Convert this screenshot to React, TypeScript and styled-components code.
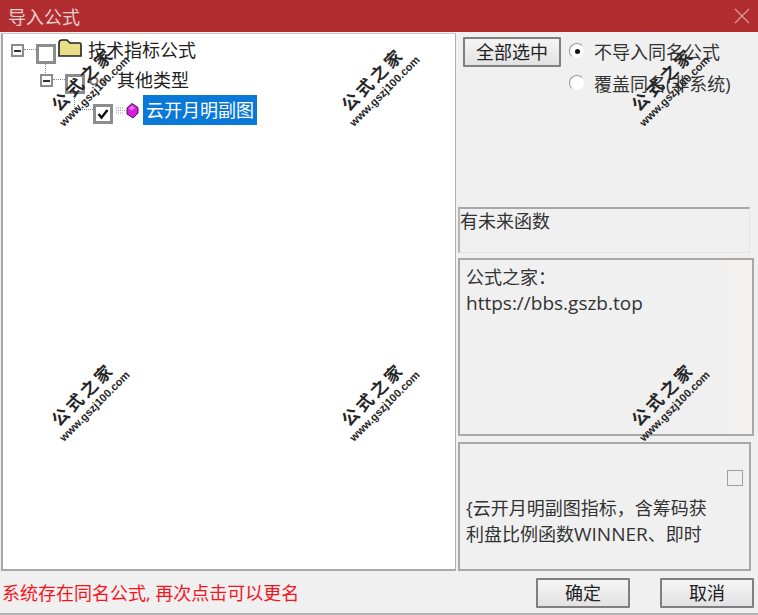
import React from 'react';
import styled, { createGlobalStyle } from 'styled-components';

const FONT = '"Open Sans", "Noto Sans CJK SC", "Liberation Sans", sans-serif';

const GlobalStyle = createGlobalStyle`
  html, body {
    margin: 0;
    padding: 0;
    background: #f0f0f0;
  }
  body {
    font-family: ${FONT};
    color: #333;
  }
`;

const Dialog = styled.div`
  position: relative;
  width: 758px;
  height: 615px;
  display: flex;
  flex-direction: column;
  overflow: hidden;
  background: #f0f0f0;
  border-bottom: 2px solid #b4b4b4;
  box-sizing: border-box;
`;

const TitleBar = styled.div`
  height: 32px;
  flex: none;
  display: flex;
  align-items: center;
  justify-content: space-between;
  padding: 0 8px;
  background: #b22d30;
  color: #edcfcf;
  font-size: 18px;
`;

const CloseIcon = styled.svg`
  width: 16px;
  height: 16px;
  stroke: #dd9a9a;
  stroke-width: 1.2;
  fill: none;
`;

const Body = styled.div`
  flex: 1;
  min-height: 0;
  display: grid;
  grid-template-columns: 455px 1fr;
  column-gap: 2px;
  padding-top: 1px;
  padding-left: 1px;
`;

const TreePanel = styled.div`
  background: #fff;
  border-left: 2px solid #a8a8a8;
  border-right: 1px solid #b0b0b0;
  border-bottom: 2px solid #a8a8a8;
  border-top: 1px solid #c8c8c8;
  box-sizing: border-box;
`;

const TreeRow = styled.div<{ $indent: number }>`
  position: relative;
  height: 30px;
  display: flex;
  align-items: flex-start;
  padding-left: ${p => p.$indent}px;
  font-size: 18px;
  line-height: 30px;
  color: #222;
`;

const Expander = styled.span`
  flex: none;
  width: 9px;
  height: 9px;
  margin-top: 10px;
  border: 2px solid #8c8c8c;
  display: flex;
  align-items: center;
  justify-content: center;
  background: #fff;
  &::after {
    content: '';
    width: 7px;
    height: 2px;
    background: #333;
  }
`;

const HDots = styled.span<{ $width: number }>`
  flex: none;
  width: ${p => p.$width}px;
  margin-top: 15px;
  border-top: 1px dotted #888;
`;

const VDots = styled.span<{ $left: number; $top: number; $height: number }>`
  position: absolute;
  left: ${p => p.$left}px;
  top: ${p => p.$top}px;
  height: ${p => p.$height}px;
  border-left: 1px dotted #888;
`;

const TreeCheck = styled.span`
  flex: none;
  width: 14px;
  height: 14px;
  margin-top: 10px;
  border: 3px solid #8c8c8c;
  background: #fff;
  display: flex;
  align-items: center;
  justify-content: center;
`;

const FolderIcon = styled.svg`
  flex: none;
  width: 24px;
  height: 20px;
  margin: 4px 3px 0 2px;
`;

const GearIcon = styled.svg`
  flex: none;
  width: 20px;
  height: 16px;
  margin: 9px 6px 0 3px;
`;

const GemIcon = styled.svg`
  flex: none;
  width: 24px;
  height: 16px;
  margin: 9px 3px 0 3px;
`;

const TreeLabel = styled.span<{ $selected?: boolean }>`
  padding: 0 3px;
  margin-top: 1px;
  background: ${p => (p.$selected ? '#0a78d7' : 'transparent')};
  color: ${p => (p.$selected ? '#fff' : '#222')};
`;

const SideColumn = styled.div`
  display: flex;
  flex-direction: column;
  width: 296px;
`;

const OptionsArea = styled.div`
  height: 174px;
  flex: none;
  display: flex;
  align-items: flex-start;
  gap: 8px;
  padding: 4px 0 0 5px;
  box-sizing: border-box;
`;

const Button = styled.button<{ $w: number }>`
  width: ${p => p.$w}px;
  height: 30px;
  padding: 0;
  flex: none;
  border: 2px solid #7f7f7f;
  border-radius: 1px;
  background: linear-gradient(#f5f5f5, #e2e2e2);
  color: #222;
  font-family: ${FONT};
  font-size: 18px;
  line-height: 24px;
`;

const RadioGroup = styled.div`
  display: flex;
  flex-direction: column;
  gap: 2px;
  margin-top: -1px;
`;

const RadioRow = styled.div`
  display: flex;
  align-items: center;
  height: 30px;
  font-size: 18px;
  color: #333;
  white-space: nowrap;
`;

const RadioDot = styled.span<{ $on?: boolean }>`
  flex: none;
  width: 16px;
  height: 16px;
  margin-right: 9px;
  border-radius: 50%;
  border: 1px solid #9a9a9a;
  border-right-color: #eee;
  border-bottom-color: #eee;
  background: #fff;
  box-sizing: border-box;
  display: flex;
  align-items: center;
  justify-content: center;
  &::after {
    content: '';
    width: 5px;
    height: 5px;
    border-radius: 50%;
    background: ${p => (p.$on ? '#111' : 'transparent')};
  }
`;

const FutureBox = styled.div`
  height: 46px;
  width: 292px;
  flex: none;
  box-sizing: border-box;
  border-top: 2px solid #a8a8a8;
  border-left: 2px solid #b4b4b4;
  border-right: 1px solid #e4e4e4;
  border-bottom: 1px solid #e4e4e4;
  font-size: 18px;
  line-height: 24px;
  color: #333;
`;

const TextPanel = styled.div<{ $h: number; $w: number; $gap: number }>`
  height: ${p => p.$h}px;
  width: ${p => p.$w}px;
  flex: none;
  margin-top: ${p => p.$gap}px;
  box-sizing: border-box;
  border: 2px solid #a8a8a8;
  display: grid;
  grid-template-columns: 1fr 26px;
  font-size: 18px;
  line-height: 26px;
  color: #333;
`;

const PanelText = styled.div<{ $top: number }>`
  padding: ${p => p.$top}px 6px 0 6px;
  overflow: hidden;
`;

const Latin = styled.span`
  font-size: 19px;
`;

const ScrollGutter = styled.div`
  background: #f3f2f0;
`;

const GutterPlain = styled.div`
  display: flex;
  justify-content: center;
  padding-top: 26px;
`;

const SmallBox = styled.span`
  width: 14px;
  height: 14px;
  margin-right: 2px;
  border: 1px solid #a0a0a0;
  background: #f0f0f0;
`;

const Footer = styled.div`
  height: 42px;
  flex: none;
  display: flex;
  align-items: flex-start;
  padding: 7px 4px 0 2px;
  box-sizing: border-box;
`;

const Status = styled.div`
  flex: 1;
  font-size: 18px;
  line-height: 30px;
  color: #f5141e;
`;

const FooterButtons = styled.div`
  display: flex;
  gap: 30px;
`;

const Watermark = styled.div<{ $x: number; $y: number }>`
  position: absolute;
  left: ${p => p.$x}px;
  top: ${p => p.$y}px;
  width: 110px;
  margin-left: -58px;
  margin-top: -20px;
  transform: rotate(-45deg);
  text-align: center;
  pointer-events: none;
  color: #262626;
`;

const WatermarkTitle = styled.div`
  font-family: "Noto Sans CJK SC", serif;
  font-size: 17px;
  font-weight: 700;
  line-height: 22px;
  letter-spacing: 3px;
`;

const WatermarkUrl = styled.div`
  font-family: "Liberation Sans", sans-serif;
  font-size: 11px;
  font-weight: 700;
  line-height: 13px;
  white-space: nowrap;
`;

const marks = [
  { x: 90, y: 86 },
  { x: 380, y: 86 },
  { x: 670, y: 86 },
  { x: 90, y: 401 },
  { x: 380, y: 401 },
  { x: 670, y: 401 },
];

export default function App() {
  return (
    <>
      <GlobalStyle />
      <Dialog>
        <TitleBar>
          <span>导入公式</span>
          <CloseIcon viewBox="0 0 16 16">
            <path d="M1 1 L15 15 M15 1 L1 15" />
          </CloseIcon>
        </TitleBar>
        <Body>
          <TreePanel>
            <TreeRow $indent={8}>
              <Expander />
              <HDots $width={12} />
              <TreeCheck />
              <FolderIcon viewBox="0 0 24 20">
                <path d="M1 18 V5 Q1 2 4 2 H9 L12 5 H22 Q23 5 23 7 V18 Z" fill="#e8df88" stroke="#222" strokeWidth="1.6" />
              </FolderIcon>
              <TreeLabel>技术指标公式</TreeLabel>
              <VDots $left={42} $top={27} $height={14} />
            </TreeRow>
            <TreeRow $indent={37}>
              <Expander />
              <HDots $width={12} />
              <TreeCheck />
              <GearIcon viewBox="0 0 20 16">
                <circle cx="6" cy="8" r="3.5" fill="none" stroke="#777" strokeWidth="2" />
                <circle cx="15" cy="8" r="2.5" fill="none" stroke="#888" strokeWidth="1.6" />
              </GearIcon>
              <TreeLabel>其他类型</TreeLabel>
              <VDots $left={71} $top={27} $height={18} />
            </TreeRow>
            <TreeRow $indent={72}>
              <HDots $width={18} />
              <TreeCheck>
                <svg width="12" height="12" viewBox="0 0 12 12">
                  <path d="M1.5 6 L4.5 9.5 L10.5 2" fill="none" stroke="#111" strokeWidth="2.4" />
                </svg>
              </TreeCheck>
              <GemIcon viewBox="0 0 24 16">
                <path d="M0 5 H8 M0 7.5 H9 M0 10 H8" stroke="#999" strokeWidth="1" strokeDasharray="1 1" />
                <path d="M16 0.5 L22 4.5 V10 L17 15 L11 11 V5 Z" fill="#d41fdc" stroke="#4d0f66" strokeWidth="1" />
                <path d="M12.5 5.5 L16 2.5 L19 5 L16 7.5 Z" fill="#ef6fef" />
              </GemIcon>
              <TreeLabel $selected>云开月明副图</TreeLabel>
            </TreeRow>
          </TreePanel>
          <SideColumn>
            <OptionsArea>
              <Button $w={98}>全部选中</Button>
              <RadioGroup>
                <RadioRow>
                  <RadioDot $on />
                  不导入同名公式
                </RadioRow>
                <RadioRow>
                  <RadioDot />
                  覆盖同名(非系统)
                </RadioRow>
              </RadioGroup>
            </OptionsArea>
            <FutureBox>有未来函数</FutureBox>
            <TextPanel $h={178} $w={296} $gap={5}>
              <PanelText $top={4}>
                公式之家：
                <br />
                <Latin>https://bbs.gszb.top</Latin>
              </PanelText>
              <ScrollGutter />
            </TextPanel>
            <TextPanel $h={129} $w={293} $gap={6}>
              <PanelText $top={51}>
                {'{云开月明副图指标，含筹码获利盘比例函数'}
                <Latin>WINNER</Latin>
                、即时
              </PanelText>
              <GutterPlain>
                <SmallBox />
              </GutterPlain>
            </TextPanel>
          </SideColumn>
        </Body>
        <Footer>
          <Status>系统存在同名公式, 再次点击可以更名</Status>
          <FooterButtons>
            <Button $w={94}>确定</Button>
            <Button $w={94}>取消</Button>
          </FooterButtons>
        </Footer>
        {marks.map(m => (
          <Watermark key={`${m.x}-${m.y}`} $x={m.x} $y={m.y}>
            <WatermarkTitle>公式之家</WatermarkTitle>
            <WatermarkUrl>www.gszj100.com</WatermarkUrl>
          </Watermark>
        ))}
      </Dialog>
    </>
  );
}
